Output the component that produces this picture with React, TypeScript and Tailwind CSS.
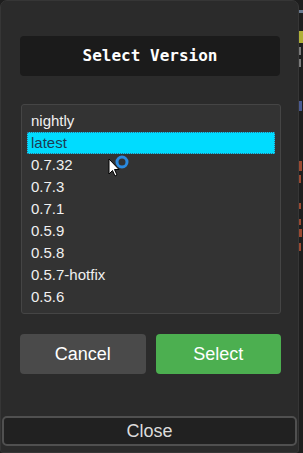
import React, { useState } from 'react';

const versions = ['nightly', 'latest', '0.7.32', '0.7.3', '0.7.1', '0.5.9', '0.5.8', '0.5.7-hotfix', '0.5.6'];

export default function App() {
  const [selected, setSelected] = useState('latest');

  return (
    <div className="relative w-[303px] h-[453px] bg-[#1e1e1e] flex overflow-hidden">
      {/* Dialog panel */}
      <div className="w-[299px] h-full flex flex-col bg-[#2b2b2b] border border-[#363636] rounded-t-[7px] rounded-b-[3px]">
        <div className="ml-[19px] w-[260px] mt-[35px] h-[40px] bg-[#1b1b1b] rounded-[4px] flex items-center justify-center">
          <span className="text-white text-[16px] font-bold font-['DejaVu_Sans_Mono',monospace]">Select Version</span>
        </div>

        <div className="ml-[20px] w-[260px] mt-[28px] h-[210px] bg-[#333333] border border-[#454545] rounded-[3px] px-[5px] py-[5px] flex flex-col">
          {versions.map((v) => {
            const isSel = v === selected;
            return (
              <div
                key={v}
                onClick={() => setSelected(v)}
                className={`h-[22px] shrink-0 flex items-center text-[15px] font-['Liberation_Sans',Arial,sans-serif] cursor-default ${
                  isSel
                    ? 'bg-[#00dcff] text-[#1b3c55] border border-dotted border-[#2f6f8f] pl-[3px]'
                    : 'text-[#f0f0f0] pl-[4px]'
                }`}
              >
                {v}
              </div>
            );
          })}
        </div>

        <div className="ml-[19px] w-[261px] mt-[20px] flex gap-[10px]">
          <button className="flex-1 h-[40px] rounded-[4px] bg-[#4a4a4a] text-white text-[18px] font-['Liberation_Sans',Arial,sans-serif]">
            Cancel
          </button>
          <button className="flex-1 h-[40px] rounded-[4px] bg-[#4caf50] text-white text-[18px] font-['Liberation_Sans',Arial,sans-serif]">
            Select
          </button>
        </div>

        <div className="flex-1" />

        <button className="mx-[1px] mb-[6px] h-[30px] rounded-[5px] bg-[#212121] border-2 border-[#505050] text-[#dcdcdc] text-[18px] leading-none flex items-center justify-center font-['Liberation_Sans',Arial,sans-serif]">
          Close
        </button>
      </div>

      {/* Background app peeking through on the right */}
      <div className="flex-1 flex flex-col pt-[8px]">
        <div className="h-[3px] bg-[#6a7a90] mt-[2px]" />
        <div className="h-[12px] bg-[#b0b038] mt-[18px]" />
        <div className="h-[8px] bg-[#7a7a7a] mt-[4px] w-[2px]" />
        <div className="h-[8px] bg-[#7a7a7a] mt-[4px] w-[2px]" />
        <div className="h-[10px] bg-[#4a5a90] mt-[34px] w-[3px]" />
        <div className="h-[10px] bg-[#9a4a32] mt-[50px] w-[3px]" />
        <div className="h-[8px] bg-[#9a4a32] mt-[4px] w-[2px]" />
        <div className="h-[6px] bg-[#9a4a32] mt-[20px] w-[2px]" />
        <div className="h-[6px] bg-[#9a4a32] mt-[10px] w-[2px]" />
        <div className="h-[8px] bg-[#9a4a32] mt-[4px] w-[3px]" />
        <div className="h-[8px] bg-[#9a4a32] mt-[6px] w-[2px]" />
      </div>

      {/* Mouse cursor with busy ring */}
      <svg className="absolute left-[108px] top-[158px]" width="24" height="24" viewBox="0 0 24 24">
        <path d="M1 1 L1 16 L4.5 12.5 L7 18 L9 17 L6.5 11.5 L11 11.5 Z" fill="#ffffff" stroke="#000000" strokeWidth="1" />
      </svg>
      <svg className="absolute left-[114px] top-[154px]" width="16" height="16" viewBox="0 0 16 16">
        <circle cx="8" cy="8" r="5" fill="none" stroke="#2a8ae0" strokeWidth="3" />
      </svg>
    </div>
  );
}
